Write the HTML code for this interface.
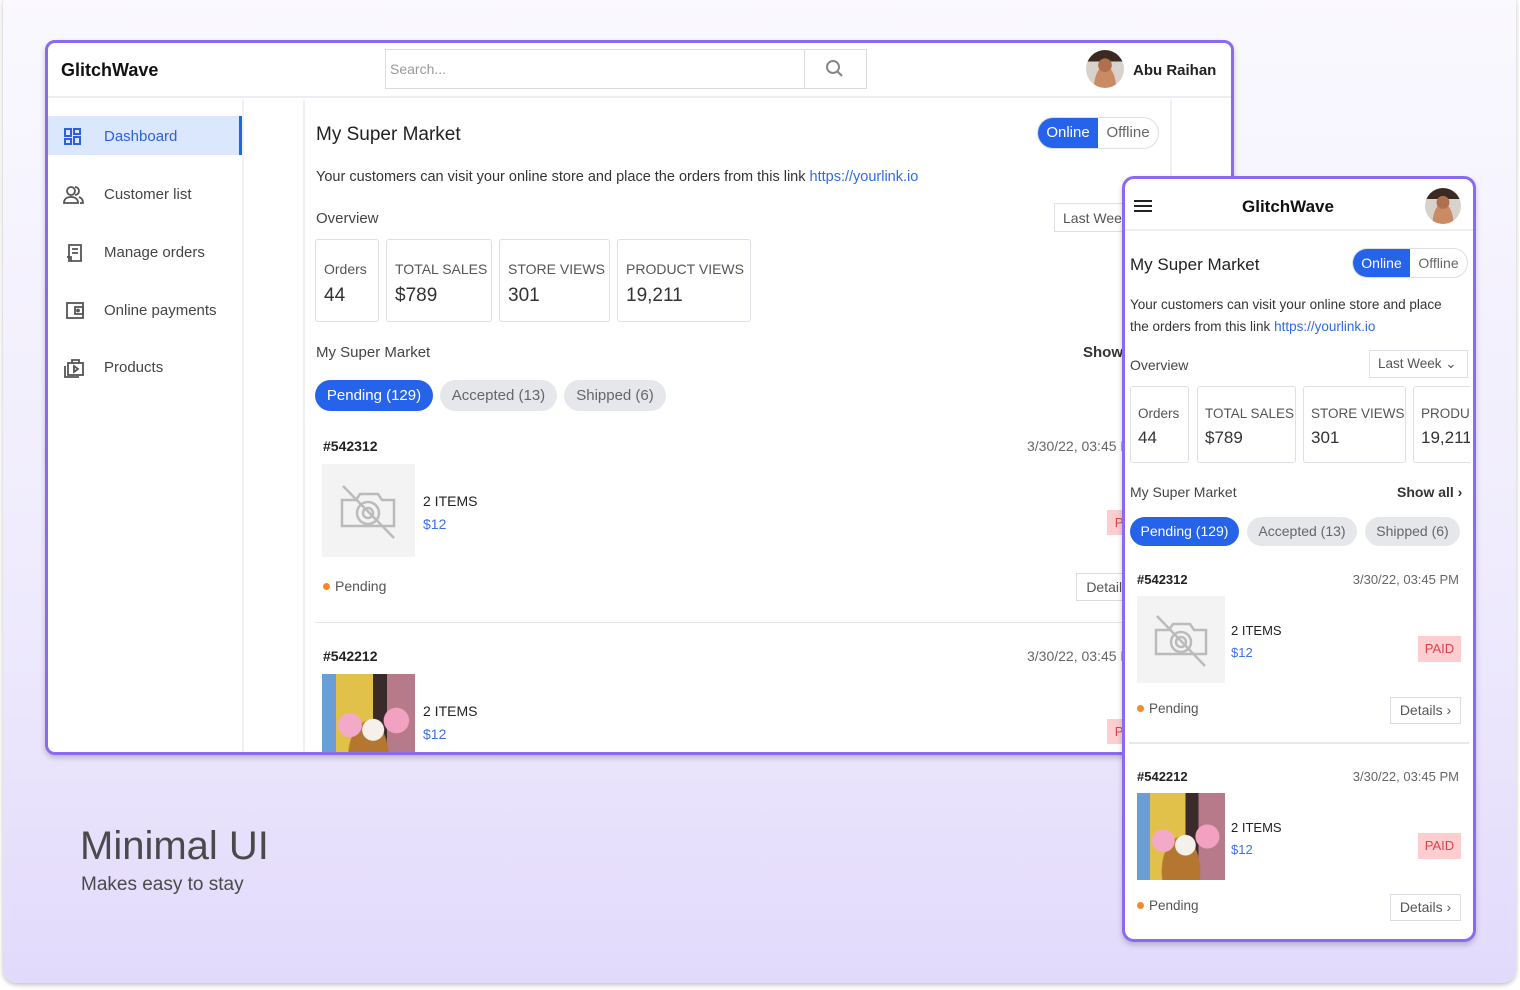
<!DOCTYPE html>
<html><head><meta charset="utf-8"><style>
*{box-sizing:border-box;margin:0;padding:0}
body{width:1520px;height:990px;background:#fff;font-family:"Liberation Sans",sans-serif;position:relative;overflow:hidden;color:#222}
.a{position:absolute;white-space:nowrap}
#bg{position:absolute;left:3px;top:-10px;width:1513px;height:993px;border-radius:14px;background:linear-gradient(180deg,#faf9fe 0%,#efebfd 60%,#e2dafb 100%);box-shadow:0 2px 5px rgba(0,0,0,.25)}
.win{position:absolute;background:#fff;border:3px solid #8b6af3;overflow:hidden;box-shadow:0 3px 6px rgba(0,0,0,.2)}
.card{position:absolute;border:1px solid #dcdfe4;border-radius:3px}
.lbl{position:absolute;font-size:14px;color:#555;white-space:nowrap}
.val{position:absolute;font-size:19px;color:#333;white-space:nowrap}
.pill{position:absolute;border-radius:16px;background:#e5e7eb;color:#666;font-size:15px;text-align:center}
.pill.on{background:#2563eb;color:#fff}
.paid{position:absolute;background:#fdcdd0;color:#e0424c;font-size:13px;text-align:center}
.det{position:absolute;border:1px solid #d9dce1;color:#555;font-size:14px;text-align:center;background:#fff}
.dot{display:inline-block;width:7px;height:7px;border-radius:50%;background:#f58a2d;margin-right:5px;vertical-align:1px}
.noimg{position:absolute;background:#f3f3f3}
.food{position:absolute;background:
radial-gradient(circle at 30% 55%,#f3a9c8 0 14%,transparent 15%),
radial-gradient(circle at 55% 60%,#f5f0ea 0 14%,transparent 15%),
radial-gradient(circle at 80% 50%,#f2a2c0 0 14%,transparent 15%),
radial-gradient(ellipse at 50% 90%,#b5762f 0 30%,transparent 32%),
linear-gradient(90deg,#6a9ed6 0 15%,#e1c14a 15% 55%,#3a2a2a 55% 70%,#b77a8a 70% 100%)}
</style></head><body>
<div id="bg"></div>

<!-- main window -->
<div class="win" style="left:45px;top:40px;width:1189px;height:715px;border-radius:10px">
 <div style="position:absolute;left:0;top:0;width:1189px;height:55px;border-bottom:2px solid #eceef1"></div>
 <div class="a" style="left:13px;top:17px;font-size:18px;font-weight:bold;color:#111">GlitchWave</div>
 <div class="a" style="left:337px;top:6px;width:420px;height:40px;border:1px solid #d8dbe0;color:#999;font-size:14px;padding:11px 4px">Search...</div>
 <div class="a" style="left:756px;top:6px;width:63px;height:40px;border:1px solid #d8dbe0"><svg width="63" height="40"><circle cx="28" cy="17" r="6" fill="none" stroke="#888" stroke-width="2"/><line x1="32" y1="21" x2="37" y2="26" stroke="#888" stroke-width="2.2"/></svg></div>
 <div class="a" style="left:1038px;top:7px;width:38px;height:38px;border-radius:50%;background:radial-gradient(circle at 50% 40%,#b0704d 0 22%,transparent 24%),radial-gradient(ellipse at 50% 100%,#c98a64 0 40%,transparent 42%),linear-gradient(180deg,#3b2a22 0 30%,#d8d2cc 30%)"></div>
 <div class="a" style="left:1085px;top:19px;font-size:15px;font-weight:bold;color:#222">Abu Raihan</div>
 <div style="position:absolute;left:194px;top:57px;width:2px;height:660px;background:#eef0f3"></div>
 <div style="position:absolute;left:255px;top:57px;width:2px;height:660px;background:#eef0f3"></div>
 <div style="position:absolute;left:1122px;top:57px;width:2px;height:660px;background:#eef0f3"></div>
 <div style="position:absolute;left:0;top:73px;width:194px;height:39px;background:#dbe7fd;border-right:3px solid #2563eb"></div>
 <svg class="a" style="left:15px;top:84px" width="20" height="20"><g fill="none" stroke="#2f5fe0" stroke-width="2"><rect x="2" y="2" width="6" height="7"/><rect x="2" y="12" width="6" height="5"/><rect x="11" y="2" width="6" height="5"/><rect x="11" y="10" width="6" height="7"/></g></svg>
 <div class="a" style="left:56px;top:85px;font-size:15px;color:#2f5fe0">Dashboard</div>
 <svg class="a" style="left:15px;top:142px" width="22" height="20"><g fill="none" stroke="#555" stroke-width="1.8"><circle cx="8" cy="6" r="4"/><path d="M1 18c0-4 3-6 7-6s7 2 7 6z"/><path d="M12 2a4 4 0 0 1 0 8M16 12c3 1 4 3 4 6h-3"/></g></svg>
 <div class="a" style="left:56px;top:143px;font-size:15px;color:#444">Customer list</div>
 <svg class="a" style="left:17px;top:200px" width="20" height="20"><g fill="none" stroke="#555" stroke-width="1.8"><path d="M4 2h12v16H4z"/><path d="M7 6h6M7 10h6M2 14h4v4"/></g></svg>
 <div class="a" style="left:56px;top:201px;font-size:15px;color:#444">Manage orders</div>
 <svg class="a" style="left:17px;top:258px" width="20" height="20"><g fill="none" stroke="#555" stroke-width="1.8"><rect x="2" y="2" width="16" height="15"/><path d="M10 6h8v7h-8z"/><circle cx="13" cy="9.5" r="1"/></g></svg>
 <div class="a" style="left:56px;top:259px;font-size:15px;color:#444">Online payments</div>
 <svg class="a" style="left:15px;top:315px" width="22" height="20"><g fill="none" stroke="#555" stroke-width="1.8"><rect x="5" y="5" width="15" height="12"/><path d="M9 5V2h7v3M2 8v11h14"/><path d="M11 8l4 3-4 3z"/></g></svg>
 <div class="a" style="left:56px;top:316px;font-size:15px;color:#444">Products</div>
 <div class="a" style="left:268px;top:81px;font-size:19px;color:#222">My Super Market</div>
 <div class="a" style="left:989px;top:74px;width:122px;height:32px;border:1px solid #dcdfe4;border-radius:16px;overflow:hidden;font-size:15px"><span style="position:absolute;left:0;top:0;width:60px;height:32px;background:#2563eb;color:#fff;text-align:center;line-height:30px">Online</span><span style="position:absolute;left:60px;top:0;width:60px;text-align:center;line-height:30px;color:#666">Offline</span></div>
 <div class="a" style="left:268px;top:126px;font-size:14.5px;color:#333">Your customers can visit your online store and place the orders from this link <span style="color:#2f6be6">https://yourlink.io</span></div>
 <div class="a" style="left:268px;top:167px;font-size:15px;color:#444">Overview</div>
 <div class="a" style="left:1006px;top:160px;width:100px;height:29px;border:1px solid #dcdfe4;font-size:14px;color:#555;padding:6px 8px">Last Week</div>
 <div class="card" style="left:267px;top:196px;width:64px;height:83px"></div><div class="lbl" style="left:276px;top:218px">Orders</div><div class="val" style="left:276px;top:242px">44</div>
 <div class="card" style="left:338px;top:196px;width:106px;height:83px"></div><div class="lbl" style="left:347px;top:218px">TOTAL SALES</div><div class="val" style="left:347px;top:242px">$789</div>
 <div class="card" style="left:451px;top:196px;width:111px;height:83px"></div><div class="lbl" style="left:460px;top:218px">STORE VIEWS</div><div class="val" style="left:460px;top:242px">301</div>
 <div class="card" style="left:569px;top:196px;width:134px;height:83px"></div><div class="lbl" style="left:578px;top:218px">PRODUCT VIEWS</div><div class="val" style="left:578px;top:242px">19,211</div>
 <div class="a" style="left:268px;top:301px;font-size:15px;color:#444">My Super Market</div>
 <div class="a" style="left:1035px;top:301px;font-size:15px;font-weight:bold;color:#333">Show all</div>
 <div class="pill on" style="left:267px;top:337px;width:118px;height:31px;line-height:31px">Pending (129)</div>
 <div class="pill" style="left:392px;top:337px;width:117px;height:31px;line-height:31px">Accepted (13)</div>
 <div class="pill" style="left:516px;top:337px;width:102px;height:31px;line-height:31px">Shipped (6)</div>
 <div class="a" style="left:275px;top:395px;font-size:14px;font-weight:bold;color:#222">#542312</div>
 <div class="a" style="left:979px;top:395px;font-size:14px;color:#666">3/30/22, 03:45 PM</div>
 <div class="noimg" style="left:274px;top:421px;width:93px;height:93px"><svg width="93" height="93"><g fill="none" stroke="#bbb" stroke-width="2.5"><path d="M20 36h14l4-6h18l4 6h12v26H20z"/><circle cx="46" cy="49" r="11"/><circle cx="46" cy="49" r="5"/><line x1="21" y1="22" x2="72" y2="74"/></g></svg></div>
 <div class="a" style="left:375px;top:450px;font-size:14px;color:#222">2 ITEMS</div>
 <div class="a" style="left:375px;top:473px;font-size:14px;color:#3d6fe6">$12</div>
 <div class="paid" style="left:1059px;top:467px;width:45px;height:25px;line-height:25px">PAID</div>
 <div class="a" style="left:275px;top:535px;font-size:14px;color:#555"><span class="dot"></span>Pending</div>
 <div class="det" style="left:1028px;top:530px;width:72px;height:28px;line-height:26px">Details ›</div>
 <div style="position:absolute;left:267px;top:579px;width:860px;height:1px;background:#e3e5e9"></div>
 <div class="a" style="left:275px;top:605px;font-size:14px;font-weight:bold;color:#222">#542212</div>
 <div class="a" style="left:979px;top:605px;font-size:14px;color:#666">3/30/22, 03:45 PM</div>
 <div class="food" style="left:274px;top:631px;width:93px;height:93px"></div>
 <div class="a" style="left:375px;top:660px;font-size:14px;color:#222">2 ITEMS</div>
 <div class="a" style="left:375px;top:683px;font-size:14px;color:#3d6fe6">$12</div>
 <div class="paid" style="left:1059px;top:676px;width:45px;height:25px;line-height:25px">PAID</div>
</div>

<!-- phone -->
<div class="win" style="left:1122px;top:176px;width:354px;height:766px;border-radius:12px">
 <div style="position:absolute;left:0;top:0;width:354px;height:52px;border-bottom:2px solid #eceef1"></div>
 <svg class="a" style="left:9px;top:21px" width="18" height="12"><g stroke="#222" stroke-width="2"><line x1="0" y1="1" x2="18" y2="1"/><line x1="0" y1="6" x2="18" y2="6"/><line x1="0" y1="11" x2="18" y2="11"/></g></svg>
 <div class="a" style="left:0;width:326px;text-align:center;top:18px;font-size:17px;font-weight:bold;color:#111">GlitchWave</div>
 <div class="a" style="left:300px;top:9px;width:36px;height:36px;border-radius:50%;background:radial-gradient(circle at 50% 40%,#b0704d 0 22%,transparent 24%),radial-gradient(ellipse at 50% 100%,#c98a64 0 40%,transparent 42%),linear-gradient(180deg,#3b2a22 0 30%,#d8d2cc 30%)"></div>
 <div class="a" style="left:5px;top:76px;font-size:17px;color:#222">My Super Market</div>
 <div class="a" style="left:227px;top:69px;width:116px;height:30px;border:1px solid #dcdfe4;border-radius:15px;overflow:hidden;font-size:14px"><span style="position:absolute;left:0;top:0;width:57px;height:30px;background:#2563eb;color:#fff;text-align:center;line-height:28px">Online</span><span style="position:absolute;left:57px;top:0;width:57px;text-align:center;line-height:28px;color:#666">Offline</span></div>
 <div class="a" style="left:5px;top:115px;font-size:13.5px;color:#333;line-height:22px">Your customers can visit your online store and place<br>the orders from this link <span style="color:#2f6be6">https://yourlink.io</span></div>
 <div class="a" style="left:5px;top:178px;font-size:14px;color:#444">Overview</div>
 <div class="a" style="left:244px;top:171px;width:99px;height:28px;border:1px solid #dcdfe4;font-size:13.5px;color:#555;padding:5px 8px">Last Week ⌄</div>
 <div style="position:absolute;left:5px;top:205px;width:340px;height:80px;overflow:hidden">
  <div class="card" style="left:0;top:2px;width:59px;height:77px"></div><div class="lbl" style="left:8px;top:22px;font-size:13.5px">Orders</div><div class="val" style="left:8px;top:44px;font-size:17px">44</div>
  <div class="card" style="left:67px;top:2px;width:99px;height:77px"></div><div class="lbl" style="left:75px;top:22px;font-size:13.5px">TOTAL SALES</div><div class="val" style="left:75px;top:44px;font-size:17px">$789</div>
  <div class="card" style="left:173px;top:2px;width:103px;height:77px"></div><div class="lbl" style="left:181px;top:22px;font-size:13.5px">STORE VIEWS</div><div class="val" style="left:181px;top:44px;font-size:17px">301</div>
  <div class="card" style="left:283px;top:2px;width:120px;height:77px"></div><div class="lbl" style="left:291px;top:22px;font-size:13.5px">PRODUCT VIEWS</div><div class="val" style="left:291px;top:44px;font-size:17px">19,211</div>
 </div>
 <div class="a" style="left:5px;top:305px;font-size:14px;color:#444">My Super Market</div>
 <div class="a" style="left:272px;top:305px;font-size:14px;font-weight:bold;color:#333">Show all ›</div>
 <div class="pill on" style="left:5px;top:338px;width:109px;height:29px;line-height:29px;font-size:14px">Pending (129)</div>
 <div class="pill" style="left:122px;top:338px;width:110px;height:29px;line-height:29px;font-size:14px">Accepted (13)</div>
 <div class="pill" style="left:240px;top:338px;width:95px;height:29px;line-height:29px;font-size:14px">Shipped (6)</div>
 <div class="a" style="left:12px;top:393px;font-size:13px;font-weight:bold;color:#222">#542312</div>
 <div class="a" style="right:14px;top:393px;font-size:13px;color:#666">3/30/22, 03:45 PM</div>
 <div class="noimg" style="left:12px;top:417px;width:88px;height:87px"><svg width="88" height="87"><g fill="none" stroke="#bbb" stroke-width="2.5"><path d="M19 34h13l4-6h17l4 6h12v24H19z"/><circle cx="44" cy="46" r="10"/><circle cx="44" cy="46" r="5"/><line x1="20" y1="20" x2="68" y2="70"/></g></svg></div>
 <div class="a" style="left:106px;top:444px;font-size:13px;color:#222">2 ITEMS</div>
 <div class="a" style="left:106px;top:466px;font-size:13px;color:#3d6fe6">$12</div>
 <div class="paid" style="left:293px;top:457px;width:43px;height:26px;line-height:26px">PAID</div>
 <div class="a" style="left:12px;top:522px;font-size:13.5px;color:#555"><span class="dot"></span>Pending</div>
 <div class="det" style="left:265px;top:518px;width:71px;height:27px;line-height:25px">Details ›</div>
 <div style="position:absolute;left:4px;top:563px;width:340px;height:2px;background:#e6e8eb"></div>
 <div class="a" style="left:12px;top:590px;font-size:13px;font-weight:bold;color:#222">#542212</div>
 <div class="a" style="right:14px;top:590px;font-size:13px;color:#666">3/30/22, 03:45 PM</div>
 <div class="food" style="left:12px;top:614px;width:88px;height:87px"></div>
 <div class="a" style="left:106px;top:641px;font-size:13px;color:#222">2 ITEMS</div>
 <div class="a" style="left:106px;top:663px;font-size:13px;color:#3d6fe6">$12</div>
 <div class="paid" style="left:293px;top:654px;width:43px;height:26px;line-height:26px">PAID</div>
 <div class="a" style="left:12px;top:719px;font-size:13.5px;color:#555"><span class="dot"></span>Pending</div>
 <div class="det" style="left:265px;top:715px;width:71px;height:27px;line-height:25px">Details ›</div>
</div>

<div class="a" style="left:80px;top:824px;font-size:40px;color:#4a4a4a">Minimal UI</div>
<div class="a" style="left:81px;top:874px;font-size:19px;color:#4a4a4a">Makes easy to stay</div>
</body></html>
